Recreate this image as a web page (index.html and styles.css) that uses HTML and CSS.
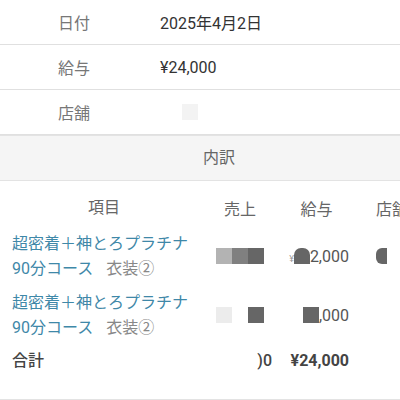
FILE: index.html
```html
<!DOCTYPE html>
<html lang="ja">
<head>
  <meta charset="UTF-8">
  <meta name="viewport" content="width=device-width, initial-scale=1.0">
  <title>明細</title>
  <link rel="stylesheet" href="styles.css">
</head>
<body>
  <div class="info">
    <div class="info-row"><span class="label">日付</span><span class="value">2025年4月2日</span></div>
    <div class="info-row"><span class="label">給与</span><span class="value">¥24,000</span></div>
    <div class="info-row"><span class="label">店舗</span><span class="value"><span class="blur faint"></span></span></div>
  </div>

  <div class="section-title">内訳</div>

  <div class="breakdown">
    <div class="head item">項目</div>
    <div class="head sales">売上</div>
    <div class="head pay">給与</div>
    <div class="head shop">店舗</div>

    <div class="item"><a class="course">超密着＋神とろプラチナ<br>90分コース</a><span class="option">衣装②</span></div>
    <div class="num sales"><span class="blur light"></span><span class="blur mid"></span><span class="blur dark"></span></div>
    <div class="num pay"><span class="tiny">¥</span><span class="blur dark round"></span>2,000</div>
    <div class="num shop"><span class="blur dark half"></span></div>

    <div class="item"><a class="course">超密着＋神とろプラチナ<br>90分コース</a><span class="option">衣装②</span></div>
    <div class="num sales"><span class="blur pale"></span><span class="gap"></span><span class="blur dark"></span></div>
    <div class="num pay"><span class="blur dark"></span>,000</div>
    <div class="num shop"><span class="blur pale edge"></span></div>

    <div class="item total">合計</div>
    <div class="num sales total">)0</div>
    <div class="num pay total">¥24,000</div>
    <div class="num shop"></div>
  </div>

  <div class="footer"></div>
</body>
</html>
```

FILE: styles.css
```css
body {
  margin: 0;
  font-family: Roboto, "Noto Sans CJK JP", sans-serif;
  font-size: 16px;
  color: #333;
  background-color: #fff;
  overflow: hidden;
}
.info-row {
  display: flex;
  align-items: center;
  height: 44px;
  border-bottom: 1px solid #e0e0e0;
}
.label {
  width: 102px;
  padding-left: 58px;
  color: #777;
}
.value {
  color: #333;
}
.faint {
  margin-left: 22px;
}
.section-title {
  height: 44px;
  line-height: 44px;
  padding-left: 203px;
  background-color: #f5f5f5;
  border-top: 1px solid #e3e3e3;
  border-bottom: 1px solid #e3e3e3;
  color: #666;
}
.breakdown {
  display: grid;
  grid-template-columns: 184px 88px 65px 60px;
  padding: 14px 0 0 12px;
  row-gap: 9px;
  align-items: center;
}
.head {
  color: #666;
  text-align: center;
  padding-bottom: 2px;
}
.head.shop {
  text-align: left;
  padding-left: 27px;
  white-space: nowrap;
}
.item {
  line-height: 25px;
}
.course {
  color: #3f88a8;
}
.option {
  color: #888;
  margin-left: 13px;
}
.num {
  text-align: right;
  color: #555;
  white-space: nowrap;
}
.num.sales {
  padding-right: 20px;
}
.total {
  color: #444;
  font-weight: 500;
  line-height: 24px;
}
.num.total {
  font-weight: 700;
}
.num.sales.total {
  padding-right: 12px;
  font-weight: 500;
}
.blur {
  display: inline-block;
  width: 16px;
  height: 16px;
  vertical-align: -2px;
}
.light { background-color: #b3b3b3; }
.mid { background-color: #808080; }
.dark { background-color: #666; }
.pale { background-color: #ececec; }
.faint { background-color: #f3f3f3; }
.gap { display: inline-block; width: 16px; }
.round { border-radius: 7px 7px 0 0; }
.half {
  width: 11px;
  border-radius: 6px 0 0 6px;
  margin-right: 22px;
}
.edge {
  width: 8px;
  margin-right: -20px;
}
.tiny {
  font-size: 9px;
  color: #999;
}
.footer {
  margin-top: 26px;
  height: 10px;
  background-color: #f0f0f0;
  border-top: 1px solid #e3e3e3;
}
```
